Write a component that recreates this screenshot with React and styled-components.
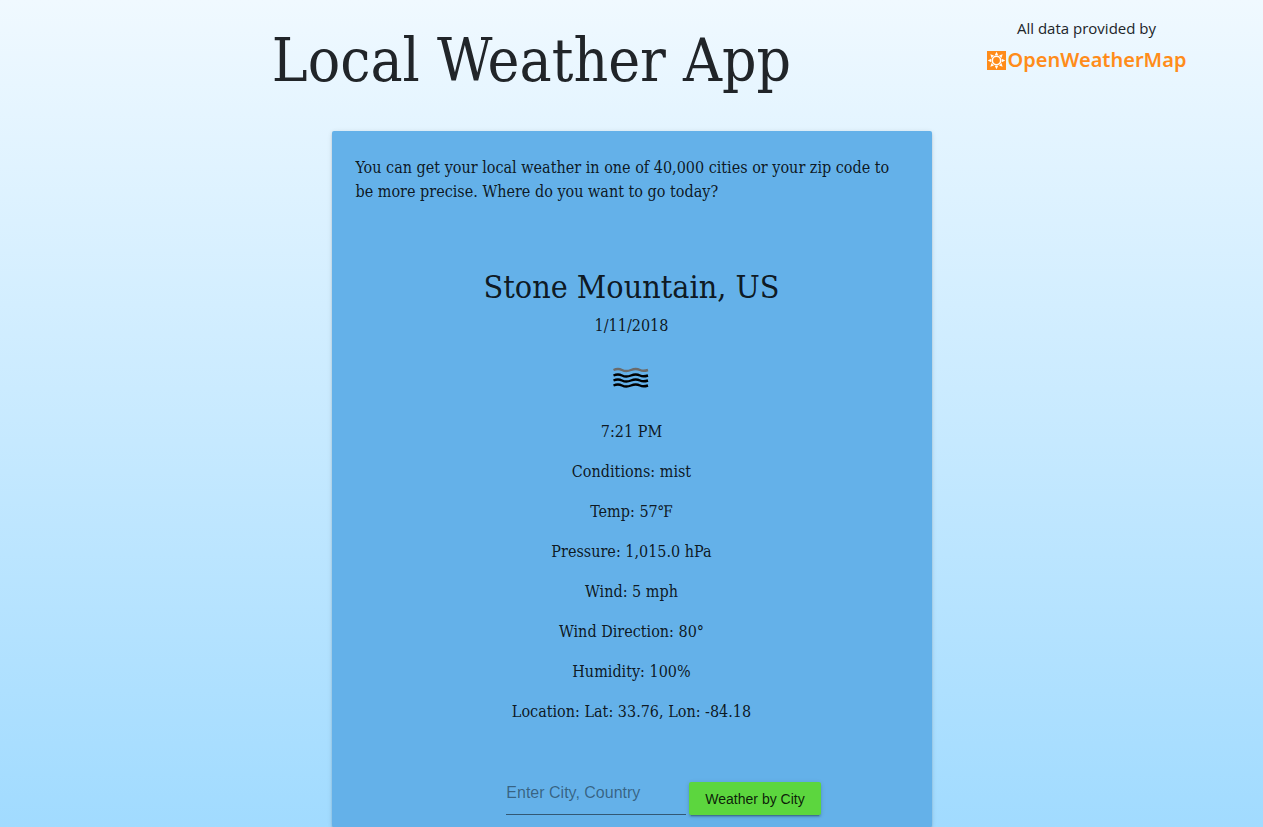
import React from "react";
import styled, { createGlobalStyle } from "styled-components";

const GlobalStyle = createGlobalStyle`
  * { box-sizing: border-box; }
  body {
    margin: 0;
    color: #212529;
    font: 16px/24px "Roboto Slab", "DejaVu Serif Condensed", "DejaVu Serif", serif;
    background: linear-gradient(to bottom, #f0f9ff 0%, #cbebff 47%, #a1dbff 100%) fixed;
  }
`;

const Page = styled.div`
  display: flex;
  flex-direction: column;
  align-items: center;
  min-height: 100vh;
`;

const Header = styled.header`
  display: flex;
  width: 100%;
  max-width: 1140px;
  padding: 16px 0 0 30px;
  margin-bottom: 27px;
`;

const Title = styled.h1`
  flex: 1;
  margin: 0;
  font-size: 60px;
  line-height: 88px;
  font-weight: 400;
  text-align: center;
`;

const Provider = styled.div`
  width: 230px;
  font-family: "Segoe UI", "Open Sans", sans-serif;
  font-size: 15px;
  text-align: center;
`;

const ProviderLink = styled.a`
  display: flex;
  align-items: center;
  justify-content: center;
  gap: 2px;
  margin-top: 8px;
  color: #ff8c1a;
  font-family: "Noto Sans", sans-serif;
  font-size: 20px;
  font-weight: 600;
  text-decoration: none;
`;

const Card = styled.main`
  flex: 1;
  width: 100%;
  max-width: 600px;
  padding: 25px 24px 12px;
  border-radius: 2px;
  background: #64b1e9;
  color: rgba(0, 0, 0, 0.87);
  box-shadow: 0 3px 1px -2px rgba(0, 0, 0, 0.2), 0 2px 2px 0 rgba(0, 0, 0, 0.14),
    0 1px 5px 0 rgba(0, 0, 0, 0.12);
`;

const Intro = styled.p`
  margin: 0 0 63px;
`;

const Report = styled.section`
  text-align: center;
`;

const City = styled.h2`
  margin: 0 0 7px;
  font-size: 32px;
  line-height: 40px;
  font-weight: 400;
`;

const Reading = styled.p`
  margin: 0 0 16px;
`;

const MistIcon = styled.svg`
  display: block;
  width: 50px;
  height: 50px;
  margin: 0 auto 16px;
`;

const SearchForm = styled.form`
  display: flex;
  justify-content: center;
  align-items: flex-end;
  gap: 3px;
  padding: 29px 0 0 64px;
`;

const CityInput = styled.input`
  width: 180px;
  height: 46px;
  padding: 4px 0 1px;
  border: 0;
  border-bottom: 1px solid rgba(0, 0, 0, 0.5);
  border-radius: 0;
  background: transparent;
  color: inherit;
  font: 16px/20px Arial, "Liberation Sans", sans-serif;

  &::placeholder {
    color: rgba(0, 0, 0, 0.45);
    opacity: 1;
  }
`;

const SearchButton = styled.button`
  height: 33px;
  padding: 0 16px;
  border: 0;
  border-radius: 2px;
  background: #5cd63e;
  color: rgba(0, 0, 0, 0.87);
  font: 14px/32px Arial, "Liberation Sans", sans-serif;
  white-space: nowrap;
  box-shadow: 0 3px 1px -2px rgba(0, 0, 0, 0.2), 0 2px 2px 0 rgba(0, 0, 0, 0.14),
    0 1px 5px 0 rgba(0, 0, 0, 0.12);
`;

const rays = [0, 45, 90, 135, 180, 225, 270, 315];

const SunLogo = () => (
  <svg width="19" height="19" viewBox="0 0 19 19" aria-hidden="true">
    <rect width="19" height="19" fill="#ff8c1a" />
    <circle cx="9.5" cy="9.5" r="4.2" fill="none" stroke="#fff" strokeWidth="1.6" />
    {rays.map((angle) => (
      <path key={angle} d="M7.8 4.2 9.5 0.8 11.2 4.2Z" fill="#fff" transform={`rotate(${angle} 9.5 9.5)`} />
    ))}
  </svg>
);

const waves = [
  { y: 15, color: "#6b6b6b" },
  { y: 20.5, color: "#000" },
  { y: 25.5, color: "#000" },
  { y: 30.5, color: "#000" },
];

const readings = [
  "7:21 PM",
  "Conditions: mist",
  "Temp: 57℉",
  "Pressure: 1,015.0 hPa",
  "Wind: 5 mph",
  "Wind Direction: 80°",
  "Humidity: 100%",
  "Location: Lat: 33.76, Lon: -84.18",
];

export default function App() {
  return (
    <>
      <GlobalStyle />
      <Page>
        <Header>
          <Title>Local Weather App</Title>
          <Provider>
            All data provided by
            <ProviderLink href="#openweathermap">
              <SunLogo />
              OpenWeatherMap
            </ProviderLink>
          </Provider>
        </Header>
        <Card>
          <Intro>
            You can get your local weather in one of 40,000 cities or your zip code to be more
            precise. Where do you want to go today?
          </Intro>
          <Report>
            <City>Stone Mountain, US</City>
            <Reading>1/11/2018</Reading>
            <MistIcon viewBox="0 0 50 50" role="img" aria-label="mist">
              {waves.map(({ y, color }) => (
                <path
                  key={y}
                  d={`M6.5 ${y}C10 ${y - 1.5} 12 ${y - 1.5} 15 ${y}S20.5 ${y + 1.5} 24 ${y}S30 ${y - 1.5} 33 ${y}S38 ${y + 1} 41 ${y}`}
                  transform="translate(0 1)"
                  fill="none"
                  stroke={color}
                  strokeWidth="2.4"
                />
              ))}
            </MistIcon>
            {readings.map((text) => (
              <Reading key={text}>{text}</Reading>
            ))}
          </Report>
          <SearchForm onSubmit={(event) => event.preventDefault()}>
            <CityInput type="text" aria-label="City and country" placeholder="Enter City, Country" />
            <SearchButton type="submit">Weather by City</SearchButton>
          </SearchForm>
        </Card>
      </Page>
    </>
  );
}
